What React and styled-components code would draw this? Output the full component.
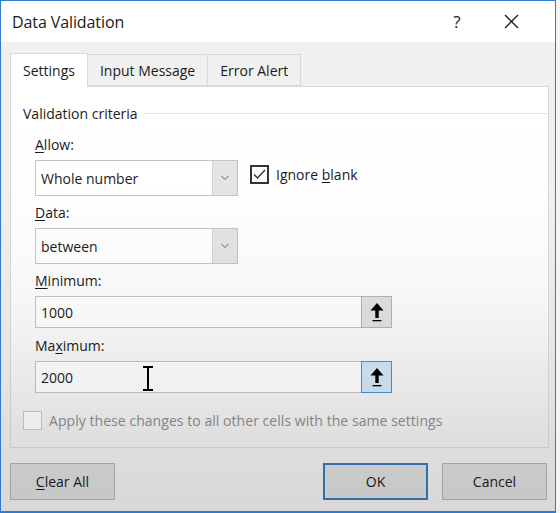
import React from "react";
import styled, { createGlobalStyle } from "styled-components";

const Global = createGlobalStyle`
  html, body { margin: 0; padding: 0; background: #f4f4f4; }
  body { font-family: "Open Sans", "Noto Sans", sans-serif; color: #1b1b1b; }
`;

const Window = styled.div`
  position: relative;
  width: 554px;
  height: 510px;
  border: 1px solid #2e7bd1;
  border-bottom-width: 2px;
  display: flex;
  flex-direction: column;
  background: #f0f0f0;
  overflow: hidden;
  &::after {
    content: "";
    position: absolute;
    inset: 0;
    pointer-events: none;
    background: linear-gradient(to bottom, rgba(0,0,0,0) 35%, rgba(0,0,0,0.035) 65%, rgba(0,0,0,0.1) 100%);
  }
`;

const TitleBar = styled.div`
  height: 41px;
  background: #fff;
  display: flex;
  align-items: center;
  padding-left: 11px;
  flex-shrink: 0;
`;

const Title = styled.div`
  flex: 1;
  font-size: 16px;
  letter-spacing: -0.1px;
`;

const TitleButton = styled.div`
  width: ${p => p.$w}px;
  display: flex;
  justify-content: center;
  align-items: center;
  font-size: 17px;
  color: #222;
`;

const Body = styled.div`
  flex: 1;
  display: flex;
  flex-direction: column;
  padding: 11px 6px 0 9px;
`;

const TabStrip = styled.div`
  display: flex;
  height: 33px;
  align-items: flex-end;
`;

const Tab = styled.div`
  height: ${p => (p.$active ? 34 : 32)}px;
  box-sizing: border-box;
  padding: 0 12px;
  display: flex;
  align-items: center;
  font-size: 14px;
  background: ${p => (p.$active ? "#fff" : "#f0f0f0")};
  border: 1px solid #d9d9d9;
  border-bottom: ${p => (p.$active ? "none" : "1px solid #d9d9d9")};
  margin-left: ${p => (p.$first ? 0 : -1)}px;
  position: relative;
  z-index: ${p => (p.$active ? 2 : 1)};
  margin-bottom: ${p => (p.$active ? -1 : 0)}px;
`;

const Panel = styled.div`
  height: 362px;
  box-sizing: border-box;
  border: 1px solid #d9d9d9;
  background: linear-gradient(to bottom, #ffffff 0%, #fefefe 55%, #f0f0f0 100%);
  padding: 17px 0 0 12px;
  display: flex;
  flex-direction: column;
`;

const Legend = styled.div`
  display: flex;
  align-items: center;
  height: 18px;
  font-size: 14px;
  &::after {
    content: "";
    flex: 1;
    height: 1px;
    background: #e2e2e2;
    margin-left: 6px;
  }
`;

const Fields = styled.div`
  padding-left: 12px;
  display: flex;
  flex-direction: column;
`;

const Label = styled.div`
  font-size: 14px;
  height: 18px;
  line-height: 18px;
  margin-top: ${p => p.$mt}px;
  margin-bottom: 6px;
  color: #1b1b1b;
  u { text-decoration-thickness: 1px; text-underline-offset: 2px; }
`;

const Row = styled.div`
  display: flex;
  align-items: flex-start;
`;

const Select = styled.div`
  width: 203px;
  height: 36px;
  box-sizing: border-box;
  border: 1px solid #c4c4c4;
  background: #fff;
  display: flex;
  font-size: 14px;
`;

const SelectText = styled.div`
  flex: 1;
  padding-left: 5px;
  display: flex;
  align-items: center;
`;

const SelectArrow = styled.div`
  width: 24px;
  background: #e4e4e4;
  border-left: 1px solid #d4d4d4;
  display: flex;
  align-items: center;
  justify-content: center;
`;

const CheckRow = styled.div`
  display: flex;
  align-items: center;
  gap: 7px;
  font-size: 14px;
  margin-left: ${p => p.$ml}px;
  margin-top: ${p => p.$mt}px;
  color: ${p => (p.$disabled ? "#8d8d8d" : "#1b1b1b")};
  letter-spacing: ${p => (p.$disabled ? "0.05px" : "0")};
  u { text-decoration-thickness: 1px; text-underline-offset: 2px; }
`;

const Box = styled.div`
  width: 19px;
  height: 19px;
  box-sizing: border-box;
  border: ${p => (p.$disabled ? "1px solid #c8c8c8" : "2px solid #333")};
  background: #fff;
  display: flex;
  align-items: center;
  justify-content: center;
`;

const InputRow = styled.div`
  display: flex;
  height: 32px;
  position: relative;
`;

const Input = styled.div`
  width: 326px;
  box-sizing: border-box;
  border: 1px solid #c4c4c4;
  border-right: none;
  background: #fff;
  font-size: 14px;
  padding-left: 5px;
  display: flex;
  align-items: center;
`;

const RefButton = styled.div`
  width: 31px;
  box-sizing: border-box;
  border: 1px solid ${p => (p.$focus ? "#4f8fd4" : "#b4b4b4")};
  background: ${p => (p.$focus ? "#d4e6f6" : "#e1e1e1")};
  display: flex;
  align-items: center;
  justify-content: center;
`;

const Cursor = styled.svg`
  position: absolute;
  left: 107px;
  top: 5px;
`;

const ButtonRow = styled.div`
  display: flex;
  margin-top: 15px;
  gap: 14px;
`;

const Button = styled.div`
  width: 105px;
  height: 37px;
  box-sizing: border-box;
  border: 1px solid ${p => (p.$default ? "#3d78b8" : "#b2b2b2")};
  box-shadow: ${p => (p.$default ? "inset 0 0 0 1px #3d78b8" : "none")};
  background: #dddddd;
  display: flex;
  align-items: center;
  justify-content: center;
  font-size: 14px;
  margin-left: ${p => p.$ml || 0}px;
  u { text-decoration-thickness: 1px; text-underline-offset: 2px; }
`;

const Chevron = () => (
  <svg width="10" height="6" viewBox="0 0 10 6">
    <path d="M1.5 1 L5 4.5 L8.5 1" fill="none" stroke="#666" strokeWidth="1" />
  </svg>
);

const UpArrow = () => (
  <svg width="18" height="22" viewBox="0 0 18 22">
    <path d="M9 2 L2.5 9.5 L7.3 9.5 L7.3 17 L10.7 17 L10.7 9.5 L15.5 9.5 Z" fill="#000" />
    <rect x="4.5" y="19" width="9" height="1.3" fill="#000" />
  </svg>
);

export default function App() {
  return (
    <>
      <Global />
      <Window>
        <TitleBar>
          <Title>Data Validation</Title>
          <TitleButton $w={20}>?</TitleButton>
          <TitleButton $w={88}>
            <svg width="15" height="15" viewBox="0 0 15 15">
              <path d="M1 1 L14 14 M14 1 L1 14" stroke="#222" strokeWidth="1.4" />
            </svg>
          </TitleButton>
        </TitleBar>
        <Body>
          <TabStrip>
            <Tab $active $first>Settings</Tab>
            <Tab>Input Message</Tab>
            <Tab>Error Alert</Tab>
          </TabStrip>
          <Panel>
            <Legend>Validation criteria</Legend>
            <Fields>
              <Label $mt={14}><u>A</u>llow:</Label>
              <Row>
                <Select>
                  <SelectText>Whole number</SelectText>
                  <SelectArrow><Chevron /></SelectArrow>
                </Select>
                <CheckRow $ml={12} $mt={5}>
                  <Box>
                    <svg width="13" height="11" viewBox="0 0 13 11">
                      <path d="M1 5.5 L4.5 9 L12 1" fill="none" stroke="#333" strokeWidth="1.4" />
                    </svg>
                  </Box>
                  <span>Ignore <u>b</u>lank</span>
                </CheckRow>
              </Row>
              <Label $mt={8}><u>D</u>ata:</Label>
              <Select>
                <SelectText>between</SelectText>
                <SelectArrow><Chevron /></SelectArrow>
              </Select>
              <Label $mt={8}><u>M</u>inimum:</Label>
              <InputRow>
                <Input>1000</Input>
                <RefButton><UpArrow /></RefButton>
              </InputRow>
              <Label $mt={9}>Ma<u>x</u>imum:</Label>
              <InputRow>
                <Input>2000</Input>
                <RefButton $focus><UpArrow /></RefButton>
                <Cursor width="12" height="25" viewBox="0 0 12 25">
                  <path d="M1 1 L11 1 M6 1 L6 24 M1 24 L11 24" stroke="#000" strokeWidth="2" fill="none" />
                </Cursor>
              </InputRow>
            </Fields>
            <CheckRow $disabled $ml={0} $mt={18}>
              <Box $disabled />
              <span>Apply these changes to all other cells with the same settings</span>
            </CheckRow>
          </Panel>
          <ButtonRow>
            <Button><u>C</u>lear All</Button>
            <Button $default $ml={194}>OK</Button>
            <Button>Cancel</Button>
          </ButtonRow>
        </Body>
      </Window>
    </>
  );
}
